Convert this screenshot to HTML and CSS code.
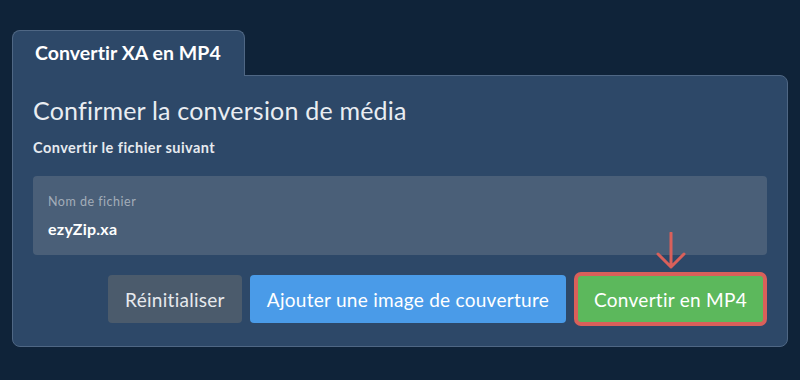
FILE: index.html
```html
<!DOCTYPE html>
<html lang="fr">
<head>
    <meta charset="UTF-8">
    <meta name="viewport" content="width=device-width, initial-scale=1.0">
    <title>Convertir XA en MP4</title>
    <link rel="stylesheet" href="styles.css">
</head>
<body>
    <div class="panel">
        <div class="tab">Convertir XA en MP4</div>

        <div class="card">
            <h2 class="card-title">Confirmer la conversion de média</h2>
            <p class="card-subtitle">Convertir le fichier suivant</p>

            <div class="file-box">
                <div class="file-label">Nom de fichier</div>
                <div class="file-name">ezyZip.xa</div>
            </div>

            <div class="actions">
                <button class="btn btn-reset">Réinitialiser</button>
                <button class="btn btn-cover">Ajouter une image de couverture</button>
                <div class="convert-wrap">
                    <!-- pointer arrow above the main button -->
                    <svg class="pointer" width="30" height="38" viewBox="0 0 30 38">
                        <path d="M15 1 V35 M2 22 L15 35 L28 22" fill="none" stroke="#d9605a" stroke-width="3" stroke-linecap="round" stroke-linejoin="round"/>
                    </svg>
                    <button class="btn btn-convert">Convertir en MP4</button>
                </div>
            </div>
        </div>
    </div>
</body>
</html>
```

FILE: styles.css
```css
body {
    margin: 0;
    padding: 30px 12px 0;
    background-color: #0f2339;
    font-family: Lato, "Open Sans", sans-serif;
    color: #e9edf2;
}

.panel {
    display: flex;
    flex-direction: column;
    align-items: flex-start;
}

.tab {
    position: relative;
    z-index: 1;
    margin-bottom: -1px;
    padding: 12px 23px 14px 22px;
    background-color: #2d4868;
    border: 1px solid #4f6784;
    border-bottom: none;
    border-radius: 8px 8px 0 0;
    font-size: 19.5px;
    font-weight: 700;
    line-height: 19px;
    letter-spacing: 0.05px;
    color: #ffffff;
}

.card {
    align-self: stretch;
    padding: 20px 20px 23px;
    background-color: #2d4868;
    border: 1px solid #4f6784;
    border-radius: 0 8px 8px 8px;
}

.card-title {
    margin: 0;
    font-size: 25px;
    font-weight: 400;
    line-height: 29px;
    letter-spacing: 0.2px;
    color: #e9edf2;
}

.card-subtitle {
    margin: 14px 0 0;
    font-size: 14.5px;
    font-weight: 700;
    line-height: 17px;
    letter-spacing: 0.45px;
    color: #e6eaef;
}

.file-box {
    margin-top: 20px;
    padding: 19px 15px 17px;
    background-color: #4a5f78;
    border-radius: 4px;
}

.file-label {
    font-size: 12.5px;
    line-height: 14px;
    letter-spacing: 0.5px;
    color: #a3adb9;
}

.file-name {
    margin-top: 10px;
    font-size: 16px;
    font-weight: 700;
    line-height: 19px;
    letter-spacing: 0.25px;
    color: #ffffff;
}

.actions {
    display: flex;
    justify-content: flex-end;
    align-items: center;
    gap: 8px;
    margin-top: 20px;
}

.btn {
    height: 48px;
    padding: 0 17px;
    border: none;
    border-radius: 4px;
    font-family: Lato, "Open Sans", sans-serif;
    font-size: 19px;
    letter-spacing: 0.28px;
    color: #ffffff;
    cursor: pointer;
}

.btn-reset {
    background-color: #4b5b6c;
    color: #e6e9ed;
}

.btn-cover {
    background-color: #4a9be8;
}

.convert-wrap {
    position: relative;
    display: flex;
    margin: 0 3px;
}

.btn-convert {
    background-color: #5cb85c;
    outline: 4px solid #d9605a;
    outline-offset: -1px;
}

.pointer {
    position: absolute;
    left: 50%;
    top: -43px;
    margin-left: -15px;
}
```
